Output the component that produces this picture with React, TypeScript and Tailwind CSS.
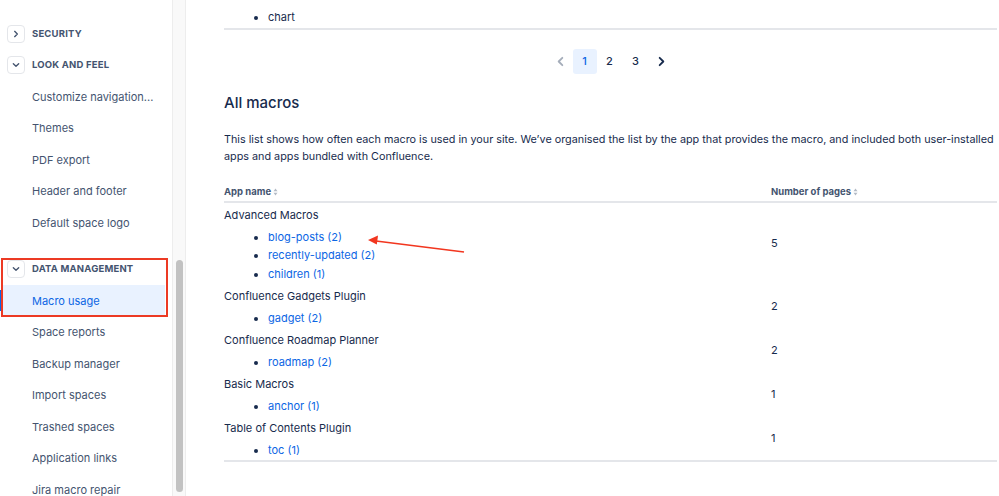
import React from 'react';

const font = { fontFamily: 'Inter, "Noto Sans", sans-serif' };

const Chevron: React.FC<{ dir: 'right' | 'down' | 'left'; className?: string }> = ({ dir, className }) => {
  const d = dir === 'right' ? 'M4 2l4 4-4 4' : dir === 'left' ? 'M8 2L4 6l4 4' : 'M2 4l4 4 4-4';
  return (
    <svg viewBox="0 0 12 12" className={className} fill="none" stroke="currentColor" strokeWidth="2" strokeLinecap="round" strokeLinejoin="round">
      <path d={d} />
    </svg>
  );
};

const SortIcon: React.FC = () => (
  <svg viewBox="0 0 6 10" className="w-[5px] h-[8px] ml-[2px] text-[#b3bac5]" fill="currentColor">
    <path d="M3 0.5L5.5 4H0.5z" />
    <path d="M3 9.5L0.5 6h5z" />
  </svg>
);

const SectionHeading: React.FC<{ label: string; open?: boolean }> = ({ label, open }) => (
  <div className="h-[31.5px] flex items-center pl-[7px] gap-[7px]">
    <span className="w-[18px] h-[18px] rounded-[4px] border border-[#e4e6ea] flex items-center justify-center text-[#44546f]">
      <Chevron dir={open ? 'down' : 'right'} className="w-[8px] h-[8px]" />
    </span>
    <span className="text-[9.5px] font-bold tracking-[0.02em] text-[#44546f] uppercase">{label}</span>
  </div>
);

const NavItem: React.FC<{ label: string; active?: boolean }> = ({ label, active }) => (
  <div className="relative h-[31.5px] flex">
    {active && <span className="absolute left-0 top-[5px] w-[3px] h-[21px] bg-[#0c66e4]" />}
    <div
      className={`flex-1 flex items-center ml-[3px] mr-[7px] pl-[29px] text-[11px] ${
        active ? 'bg-[#e9f2ff] text-[#0c66e4]' : 'text-[#44546f]'
      }`}
    >
      {label}
    </div>
  </div>
);

const rows: { app: string; macros: string[]; pages: number }[] = [
  { app: 'Advanced Macros', macros: ['blog-posts (2)', 'recently-updated (2)', 'children (1)'], pages: 5 },
  { app: 'Confluence Gadgets Plugin', macros: ['gadget (2)'], pages: 2 },
  { app: 'Confluence Roadmap Planner', macros: ['roadmap (2)'], pages: 2 },
  { app: 'Basic Macros', macros: ['anchor (1)'], pages: 1 },
  { app: 'Table of Contents Plugin', macros: ['toc (1)'], pages: 1 },
];

export default function App() {
  return (
    <div className="relative w-full h-[496px] overflow-hidden bg-white flex text-[#172b4d]" style={font}>
      {/* Sidebar */}
      <aside className="w-[172px] shrink-0 pt-[18px]">
        <SectionHeading label="Security" />
        <SectionHeading label="Look and feel" open />
        <NavItem label="Customize navigation..." />
        <NavItem label="Themes" />
        <NavItem label="PDF export" />
        <NavItem label="Header and footer" />
        <NavItem label="Default space logo" />
        <div className="mt-[15px]">
          <SectionHeading label="Data management" open />
          <NavItem label="Macro usage" active />
          <NavItem label="Space reports" />
          <NavItem label="Backup manager" />
          <NavItem label="Import spaces" />
          <NavItem label="Trashed spaces" />
          <NavItem label="Application links" />
          <NavItem label="Jira macro repair" />
        </div>
      </aside>

      {/* Scrollbar */}
      <div className="w-[14px] shrink-0 bg-[#f9f9f9] border-x border-[#ededed] pt-[260px] px-[2.5px]">
        <div className="h-[232px] rounded-full bg-[#c2c2c2]" />
      </div>

      {/* Main */}
      <main className="flex-1 pl-[38px] pr-[2px]">
        <div className="border-b-2 border-[#e4e6ea] pt-[7.5px] pb-[2px]">
          <ul className="list-disc pl-[44px] text-[11px] leading-[18px]">
            <li>chart</li>
          </ul>
        </div>

        <div className="mt-[19px] h-[25px] flex items-center justify-center text-[11px] font-medium">
          <span className="w-[25px] h-[25px] flex items-center justify-center text-[#a5adba]">
            <Chevron dir="left" className="w-[11px] h-[11px]" />
          </span>
          <span className="w-[24px] h-[25px] rounded-[3px] bg-[#e9f2ff] text-[#0c66e4] flex items-center justify-center">1</span>
          <span className="w-[26px] h-[25px] flex items-center justify-center">2</span>
          <span className="w-[26px] h-[25px] flex items-center justify-center">3</span>
          <span className="w-[25px] h-[25px] flex items-center justify-center">
            <Chevron dir="right" className="w-[11px] h-[11px]" />
          </span>
        </div>

        <h2 className="mt-[19.5px] text-[15px] leading-[20px] font-medium">All macros</h2>

        <p className="mt-[17.5px] text-[10.8px] leading-[17px]">
          This list shows how often each macro is used in your site. We’ve organised the list by the app that provides the macro, and included both user-installed apps and apps bundled with Confluence.
        </p>

        <table className="mt-[20.5px] w-full border-collapse border-b-2 border-[#e4e6ea]">
          <thead>
            <tr className="border-b-2 border-[#e4e6ea] text-[9.5px] font-bold text-[#44546f] text-left">
              <th className="w-[547px] p-0 pb-[2px] leading-[14px]">
                <span className="inline-flex items-center">App name<SortIcon /></span>
              </th>
              <th className="p-0 pb-[2px] leading-[14px]">
                <span className="inline-flex items-center">Number of pages<SortIcon /></span>
              </th>
            </tr>
          </thead>
          <tbody className="text-[11px]">
            {rows.map((r) => (
              <tr key={r.app}>
                <td className="p-0 pt-[2.5px] pb-[1px] align-top">
                  <div className="leading-[18px]">{r.app}</div>
                  <ul className="mt-[4px] list-disc pl-[44px] leading-[18.5px] text-[#0c66e4] marker:text-[#172b4d]">
                    {r.macros.map((m) => (
                      <li key={m}>{m}</li>
                    ))}
                  </ul>
                </td>
                <td className="p-0 align-middle">{r.pages}</td>
              </tr>
            ))}
          </tbody>
        </table>
      </main>

      {/* Annotation overlays */}
      <div className="absolute left-[1px] top-[258px] w-[167px] h-[59px] border-2 border-[#ec3a24] pointer-events-none" />
      <svg className="absolute left-0 top-0 w-[999px] h-[496px] pointer-events-none" viewBox="0 0 999 496">
        <line x1="464" y1="252" x2="376" y2="241" stroke="#f2361f" strokeWidth="1.6" />
        <path d="M368 240l10-4.5-1.2 9z" fill="#f2361f" />
      </svg>
    </div>
  );
}
